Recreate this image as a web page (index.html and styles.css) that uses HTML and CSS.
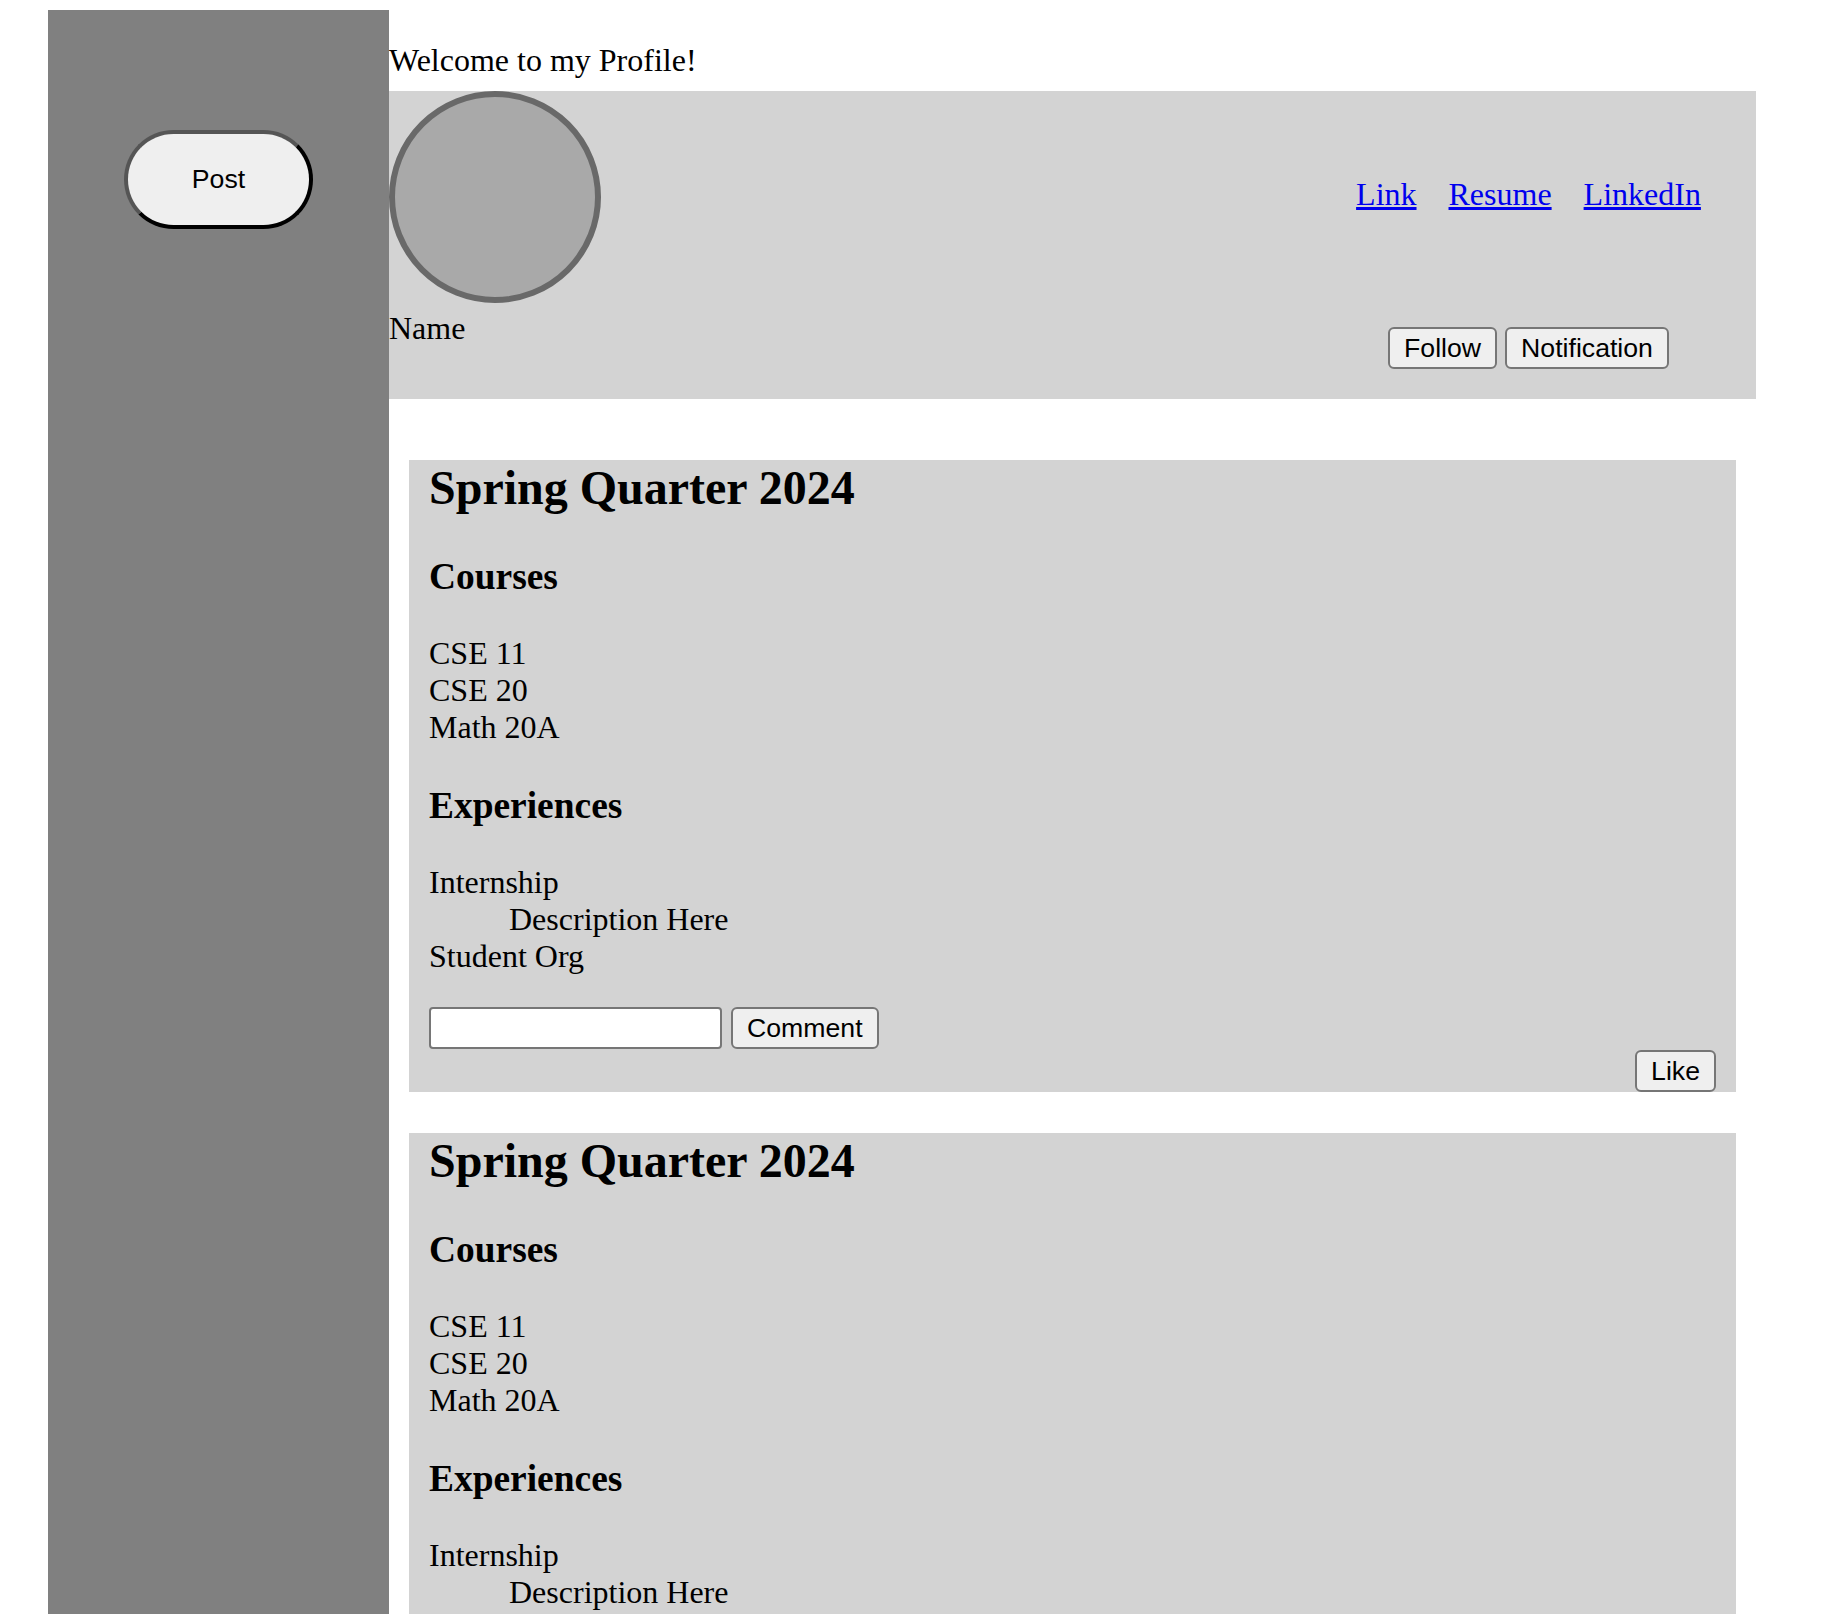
FILE: index.html
```html
<!DOCTYPE html>
<html lang="en">
<head>
<meta charset="utf-8">
<title>Profile</title>
<link rel="stylesheet" href="styles.css">
</head>
<body>
<div class="page">
  <aside class="sidebar">
    <button class="post-btn" type="button">Post</button>
  </aside>
  <main class="main">
    <p class="welcome">Welcome to my Profile!</p>
    <section class="profile">
      <div class="identity">
        <div class="avatar"></div>
        <div class="name">Name</div>
      </div>
      <div class="side-actions">
        <nav class="links">
          <a href="#">Link</a>
          <a href="#">Resume</a>
          <a href="#">LinkedIn</a>
        </nav>
        <div class="actions">
          <button class="btn" type="button">Follow</button>
          <button class="btn" type="button">Notification</button>
        </div>
      </div>
    </section>
    <div class="feed">
      <article class="card">
        <h2>Spring Quarter 2024</h2>
        <h3>Courses</h3>
        <div class="list">
          <div>CSE 11</div>
          <div>CSE 20</div>
          <div>Math 20A</div>
        </div>
        <h3>Experiences</h3>
        <dl class="exp">
          <dt>Internship</dt>
          <dd>Description Here</dd>
          <dt>Student Org</dt>
        </dl>
        <div class="comment-row">
          <input class="comment-input" type="text">
          <button class="btn" type="button">Comment</button>
        </div>
        <div class="like-row">
          <button class="btn" type="button">Like</button>
        </div>
      </article>
      <article class="card">
        <h2>Spring Quarter 2024</h2>
        <h3>Courses</h3>
        <div class="list">
          <div>CSE 11</div>
          <div>CSE 20</div>
          <div>Math 20A</div>
        </div>
        <h3>Experiences</h3>
        <dl class="exp">
          <dt>Internship</dt>
          <dd>Description Here</dd>
          <dt>Student Org</dt>
        </dl>
        <div class="comment-row">
          <input class="comment-input" type="text">
          <button class="btn" type="button">Comment</button>
        </div>
        <div class="like-row">
          <button class="btn" type="button">Like</button>
        </div>
      </article>
    </div>
  </main>
</div>
</body>
</html>
```
FILE: styles.css
```css
html, body {
  margin: 0;
  padding: 0;
  background: #ffffff;
}

body {
  font-family: "Liberation Serif", "Times New Roman", serif;
  font-size: 32px;
  line-height: normal;
  color: #000000;
}

.page {
  display: flex;
  align-items: stretch;
  padding: 10px 80px 0 48px;
  min-height: 1614px;
  box-sizing: border-box;
}

.sidebar {
  flex: none;
  width: 341px;
  background: #808080;
  display: flex;
  flex-direction: column;
  align-items: center;
  padding-top: 120px;
  box-sizing: border-box;
}

.post-btn {
  width: 189px;
  height: 99px;
  box-sizing: border-box;
  border-radius: 50px;
  border: 4px solid;
  border-color: #555555 #000000 #000000 #555555;
  background: #efefef;
  color: #000000;
  font-family: "Liberation Sans", Arial, sans-serif;
  font-size: 26.67px;
  padding: 0;
}

.main {
  flex: 1;
  min-width: 0;
}

.welcome {
  margin: 32px 0 12px;
}

.profile {
  background: #d3d3d3;
  height: 308px;
  display: flex;
  justify-content: space-between;
  align-items: flex-start;
}

.identity {
  display: flex;
  flex-direction: column;
}

.avatar {
  width: 200px;
  height: 200px;
  border-radius: 50%;
  border: 6px solid #696969;
  background: #a9a9a9;
}

.name {
  margin-top: 7px;
}

.side-actions {
  width: 355px;
  margin-right: 50px;
  padding-top: 85px;
  display: flex;
  flex-direction: column;
  align-items: center;
}

.links {
  display: flex;
  gap: 32px;
}

.links a {
  color: #0000ee;
  text-decoration: underline;
}

.actions {
  display: flex;
  gap: 8px;
  margin-top: 114px;
}

.btn {
  height: 42px;
  box-sizing: border-box;
  padding: 0 14px;
  border: 2px solid #767676;
  border-radius: 6px;
  background: #efefef;
  color: #000000;
  font-family: "Liberation Sans", Arial, sans-serif;
  font-size: 26.67px;
  line-height: 1;
}

.feed {
  margin-top: 61px;
  padding: 0 20px;
}

.card {
  background: #d3d3d3;
  padding: 0 20px;
  margin-bottom: 41px;
  display: flow-root;
}

.card h2 {
  font-size: 48px;
  font-weight: bold;
  margin: 0 0 0.83em;
}

.card h3 {
  font-size: 37.44px;
  font-weight: bold;
  margin: 1em 0;
}

.list {
  margin: 0;
}

.exp {
  margin: 32px 0;
}

.exp dt,
.exp dd {
  margin: 0;
}

.exp dd {
  margin-left: 80px;
}

.comment-row {
  display: flex;
  align-items: center;
  gap: 9px;
  height: 42px;
}

.comment-input {
  width: 293px;
  height: 42px;
  box-sizing: border-box;
  border: 2px solid #767676;
  border-radius: 4px;
  background: #ffffff;
  padding: 0 4px;
  font-family: "Liberation Sans", Arial, sans-serif;
  font-size: 26.67px;
}

.like-row {
  display: flex;
  justify-content: flex-end;
  margin-top: 1px;
}
```
